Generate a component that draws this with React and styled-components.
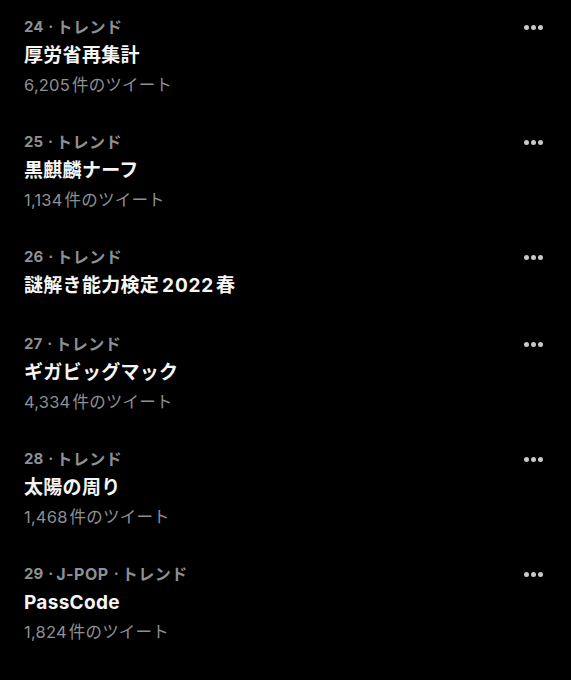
import React from 'react';
import styled, { createGlobalStyle } from 'styled-components';

const GlobalStyle = createGlobalStyle`
  html, body {
    margin: 0;
    padding: 0;
    background: #000;
  }
  body {
    font-family: "Inter", "Noto Sans CJK JP", sans-serif;
    -webkit-font-smoothing: antialiased;
  }
`;

const List = styled.div`
  width: 571px;
  min-height: 680px;
  background: #000;
  display: flex;
  flex-direction: column;
`;

const Item = styled.div`
  display: flex;
  justify-content: space-between;
  align-items: flex-start;
  padding: 13px 24px 16px 24px;
`;

const Body = styled.div`
  display: flex;
  flex-direction: column;
`;

const Label = styled.div`
  font-size: 16px;
  line-height: 28px;
  font-weight: 700;
  color: #8d9094;
  display: flex;
  align-items: center;
`;

const Rank = styled.span`
  font-size: 15px;
`;

const Dot = styled.span`
  font-size: 15px;
  font-weight: 700;
  margin: 0 3px 0 5px;
`;

const Tag = styled.span`
  letter-spacing: 0.5px;
`;

const Title = styled.div`
  font-size: 19px;
  line-height: 30px;
  font-weight: 700;
  color: #f5f5f5;
  letter-spacing: 0.3px;
`;

const Num = styled.span`
  letter-spacing: 0.8px;
  margin: 0 2px 0 3px;
`;

const Count = styled.div`
  font-size: 16.5px;
  line-height: 28px;
  font-weight: 400;
  color: #8d9094;
  letter-spacing: 0.2px;
`;

const CountNum = styled.span`
  margin-right: 2px;
`;

const More = styled.div`
  display: flex;
  gap: 2px;
  margin-top: 12px;
  margin-right: 4px;
`;

const MoreDot = styled.span`
  width: 5px;
  height: 5px;
  border-radius: 50%;
  background: #c9c9cb;
`;

const trends = [
  { rank: 24, tags: ['トレンド'], title: ['厚労省再集計'], count: '6,205' },
  { rank: 25, tags: ['トレンド'], title: ['黒麒麟ナーフ'], count: '1,134' },
  { rank: 26, tags: ['トレンド'], title: ['謎解き能力検定', '2022', '春'] },
  { rank: 27, tags: ['トレンド'], title: ['ギガビッグマック'], count: '4,334' },
  { rank: 28, tags: ['トレンド'], title: ['太陽の周り'], count: '1,468' },
  { rank: 29, tags: ['J-POP', 'トレンド'], title: ['PassCode'], count: '1,824' },
];

const App = () => (
  <>
    <GlobalStyle />
    <List>
      {trends.map((t) => (
        <Item key={t.rank}>
          <Body>
            <Label>
              <Rank>{t.rank}</Rank>
              {t.tags.map((tag) => (
                <React.Fragment key={tag}>
                  <Dot>·</Dot>
                  <Tag>{tag}</Tag>
                </React.Fragment>
              ))}
            </Label>
            <Title>
              {t.title.map((part, i) =>
                /^\d+$/.test(part) ? (
                  <Num key={i}>{part}</Num>
                ) : (
                  <span key={i}>{part}</span>
                )
              )}
            </Title>
            {t.count && (
              <Count>
                <CountNum>{t.count}</CountNum>件のツイート
              </Count>
            )}
          </Body>
          <More>
            <MoreDot />
            <MoreDot />
            <MoreDot />
          </More>
        </Item>
      ))}
    </List>
  </>
);

export default App;
